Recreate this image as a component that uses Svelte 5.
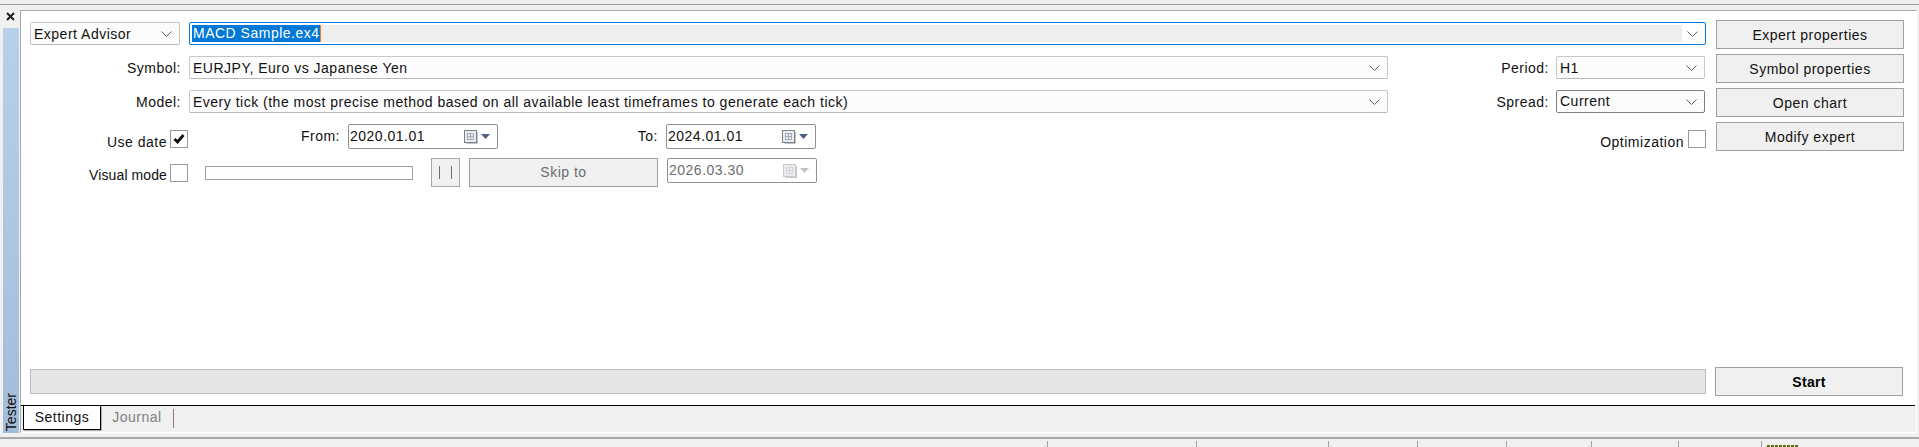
<script lang="ts">
  const statusSeps = [1047, 1196, 1328, 1417, 1506, 1591, 1678, 1761];
  const sideButtons = ['Expert properties', 'Symbol properties', 'Open chart', 'Modify expert'];
  const dots = Array.from({ length: 8 });
</script>

{#snippet chevron()}
  <svg class="chev" width="11" height="6" viewBox="0 0 11 6" fill="none"><path d="M.5.5l5 5 5-5" stroke="#606060"/></svg>
{/snippet}

{#snippet dateField(value: string, off = false)}
  <div class="date" class:off>
    <span>{value}</span>
    <svg class="cal" width="14" height="14" viewBox="0 0 14 14">
      <rect x=".5" y=".5" width="12" height="12" fill="#e8ebf0" stroke={off ? '#ccc' : '#7c828c'}/>
      <path d="M3 3.5h7M3 6.5h7M3 9.5h7M3.5 3v7M6.5 3v7M9.5 3v7" stroke={off ? '#d8d8d8' : '#a4acb8'} fill="none"/>
      <path d="M13.5 2v11.500h-11" stroke="#c4c4c4" fill="none"/>
    </svg>
    <svg width="9" height="5" viewBox="0 0 9 5"><path d="M0 0h9L4.500 5z" fill={off ? '#c4c4be' : '#4d6185'}/></svg>
  </div>
{/snippet}

<div class="app">
  <div class="topline"></div>
  <div class="main">
    <div class="side">
      <svg class="close" width="9" height="9" viewBox="0 0 9 9"><path d="M1 1l7 7M8 1l-7 7" stroke="#222" stroke-width="2"/></svg>
      <div class="handle"><span>Tester</span></div>
    </div>
    <div class="panel">
      <div class="form">
        <div class="top">
          <div class="fields">
            <div class="row">
              <div class="combo first"><span>Expert Advisor</span>{@render chevron()}</div>
              <div class="combo focus">
                <div class="fill"><span class="sel">MACD Sample.ex4</span></div>
                {@render chevron()}
              </div>
            </div>
            <div class="row">
              <span class="lab">Symbol:</span>
              <div class="combo wide"><span>EURJPY, Euro vs Japanese Yen</span>{@render chevron()}</div>
              <span class="lab mid">Period:</span>
              <div class="combo small"><span>H1</span>{@render chevron()}</div>
            </div>
            <div class="row">
              <span class="lab">Model:</span>
              <div class="combo wide"><span>Every tick (the most precise method based on all available least timeframes to generate each tick)</span>{@render chevron()}</div>
              <span class="lab mid">Spread:</span>
              <div class="combo small dark"><span class="raised">Current</span>{@render chevron()}</div>
            </div>
            <div class="row dates">
              <span class="check-lab">Use date</span>
              <div class="check">
                <svg width="12" height="10" viewBox="0 0 12 10"><path d="M1.500 5l3 3 6-7" fill="none" stroke="#111" stroke-width="2.800"/></svg>
              </div>
              <span class="lab from">From:</span>
              {@render dateField('2020.01.01')}
              <span class="lab to">To:</span>
              {@render dateField('2024.01.01')}
              <span class="opt-lab">Optimization</span>
              <div class="check"></div>
            </div>
            <div class="row visual">
              <span class="check-lab tight">Visual mode</span>
              <div class="check"></div>
              <div class="slider"></div>
              <div class="pause"><i></i><i></i></div>
              <div class="skip">Skip to</div>
              {@render dateField('2026.03.30', true)}
            </div>
          </div>
          <div class="buttons">
            {#each sideButtons as b}
              <button>{b}</button>
            {/each}
          </div>
        </div>
        <div class="bottom">
          <div class="progress"></div>
          <button class="start">Start</button>
        </div>
      </div>
      <div class="tabs">
        <div class="tab active">Settings</div>
        <div class="tab">Journal</div>
        <div class="tabsep"></div>
      </div>
    </div>
  </div>
  <div class="status">
    {#each statusSeps as x}
      <i class="sep" style="left:{x}px"></i>
    {/each}
    <div class="dots" >
      {#each dots as _}<b></b>{/each}
    </div>
  </div>
</div>

<style>
  :global(body) { margin: 0; background: #f0f0f0; }
  .app {
    width: 1919px;
    height: 447px;
    display: flex;
    flex-direction: column;
    overflow: hidden;
    background: #f0f0f0;
    color: #111;
    font: 14px "Liberation Sans", sans-serif;
    letter-spacing: .5px;
  }
  .topline { height: 4px; border-bottom: 1px solid #a0a0a0; flex: none; }

  .main {
    flex: none;
    height: 428px;
    display: flex;
    padding-right: 3px;
  }
  .side { width: 20px; flex: none; display: flex; flex-direction: column; }
  .close { margin: 7px 0 0 6px; flex: none; }
  .handle {
    flex: 1;
    margin: 7px 1px 0 3px;
    background: linear-gradient(#b9d0ea, #a2bcda);
    display: flex;
    align-items: flex-end;
    justify-content: center;
  }
  .handle span {
    writing-mode: vertical-rl;
    transform: rotate(180deg);
    letter-spacing: 0;
    line-height: 16px;
    padding-top: 2px;
  }

  .panel {
    flex: 1;
    margin-top: 5px;
    display: flex;
    flex-direction: column;
    border-top: 1px solid #a8a8a8;
    border-left: 1px solid #a8a8a8;
    border-right: 1px solid #fff;
    border-bottom: 1px solid #fff;
  }
  .form {
    flex: 1;
    background: #fff;
    display: flex;
    flex-direction: column;
    justify-content: space-between;
    padding: 9px 12px 9px 9px;
  }
  .top { display: flex; gap: 10px; }
  .fields { width: 1676px; flex: none; padding-top: 2px; }
  .row { display: flex; margin-bottom: 11px; }

  .combo {
    height: 23px;
    box-sizing: border-box;
    border: 1px solid #c8c8c8;
    border-bottom-color: #b8b8b8;
    border-radius: 2px;
    background: #fcfcfc;
    display: flex;
    align-items: center;
    justify-content: space-between;
    padding: 0 6px 0 3px;
    white-space: nowrap;
  }
  .chev { flex: none; margin-right: 1px; }
  .first { width: 150px; margin-right: 9px; }
  .focus {
    flex: 1;
    border-color: #0078d7;
    background: #fff;
    padding: 0 6px 0 2px;
  }
  .fill { width: 1490px; height: 17px; background: #eee; display: flex; }
  .sel {
    background: #0078d7;
    color: #fff;
    line-height: 17px;
    padding: 0 0 0 1px;
    border-right: 1px solid #f08020;
  }
  .wide { width: 1199px; }
  .small { width: 149px; }
  .dark { border-color: #808080; }
  .raised { margin-top: -2px; }
  .lab {
    width: 151px;
    height: 23px;
    margin-right: 8px;
    text-align: right;
    line-height: 25px;
    flex: none;
  }
  .lab.mid { width: 161px; margin-right: 7px; }

  .dates { height: 24px; margin-bottom: 10px; }
  .check-lab { width: 137px; text-align: right; margin: 9px 3px 0 0; line-height: 18px; }
  .tight { letter-spacing: .1px; }
  .check {
    width: 18px;
    height: 18px;
    box-sizing: border-box;
    border: 1px solid #999;
    background: #fff;
    align-self: flex-end;
    display: flex;
    align-items: center;
    justify-content: center;
  }
  .lab.from { width: 152px; margin-right: 8px; }
  .lab.to { width: 160px; margin-right: 8px; }
  .date {
    width: 150px;
    height: 25px;
    box-sizing: border-box;
    border: 1px solid #909090;
    border-radius: 2px;
    display: flex;
    align-items: center;
    padding: 0 7px 0 1px;
    gap: 3px;
    flex: none;
  }
  .date span { flex: 1; margin-top: -2px; }
  .date.off { color: #6d6d6d; margin-left: 9px; }
  .opt-lab { margin: 9px 4px 0 auto; line-height: 18px; }

  .visual { margin: 0; height: 29px; }
  .visual .check { align-self: flex-start; margin-top: 6px; }
  .visual .check-lab { margin-top: 8px; }
  .slider {
    width: 208px;
    height: 14px;
    box-sizing: border-box;
    border: 1px solid #a0a0a0;
    margin: 8px 18px 0 17px;
  }
  .pause {
    width: 29px;
    height: 29px;
    box-sizing: border-box;
    border: 1px solid #a8a8a8;
    background: #f0f0f0;
    display: flex;
    align-items: center;
    justify-content: center;
    gap: 11px;
    margin-right: 9px;
  }
  .pause i { width: 1px; height: 13px; background: #707070; }
  .skip {
    width: 189px;
    height: 29px;
    box-sizing: border-box;
    border: 1px solid #a0a0a0;
    background: #f0f0f0;
    color: #6d6d6d;
    text-align: center;
    line-height: 27px;
  }

  .buttons { width: 188px; flex: none; display: flex; flex-direction: column; gap: 5px; }
  button {
    height: 29px;
    padding: 0;
    box-sizing: border-box;
    border: 1px solid #a0a0a0;
    background: #f0f0f0;
    color: #111;
    font: inherit;
    letter-spacing: inherit;
    border-radius: 0;
  }

  .bottom { display: flex; gap: 9px; align-items: center; }
  .progress {
    width: 1676px;
    height: 25px;
    box-sizing: border-box;
    border: 1px solid #bcbcbc;
    background: #e6e6e6;
  }
  .start { width: 188px; font-weight: 700; color: #000; letter-spacing: .3px; }

  .tabs {
    height: 27px;
    flex: none;
    box-sizing: border-box;
    border-top: 1px solid #000;
    margin-right: 1px;
    display: flex;
    background: #f0f0f0;
    padding-left: 2px;
  }
  .tab { width: 72px; box-sizing: border-box; line-height: 23px; color: #808080; text-align: center; }
  .tab.active {
    width: 78px;
    height: 24px;
    background: #fff;
    color: #111;
    border-left: 1px solid #000;
    border-right: 1px solid #000;
    border-bottom: 1px solid #000;
    box-shadow: 1px 1px 0 #b0b0b0;
  }
  .tabsep { width: 1px; height: 19px; margin-top: 3px; background: #808080; }

  .status {
    position: relative;
    flex: 1;
    margin-top: 4px;
    border-top: 2px solid #a8a8a8;
  }
  .sep { position: absolute; top: 2px; bottom: 0; width: 1px; background: #a0a0a0; }
  .dots { position: absolute; left: 1767px; top: 6px; display: flex; gap: 1px; }
  .dots b { width: 3px; height: 3px; background: #5a7000; }
</style>
